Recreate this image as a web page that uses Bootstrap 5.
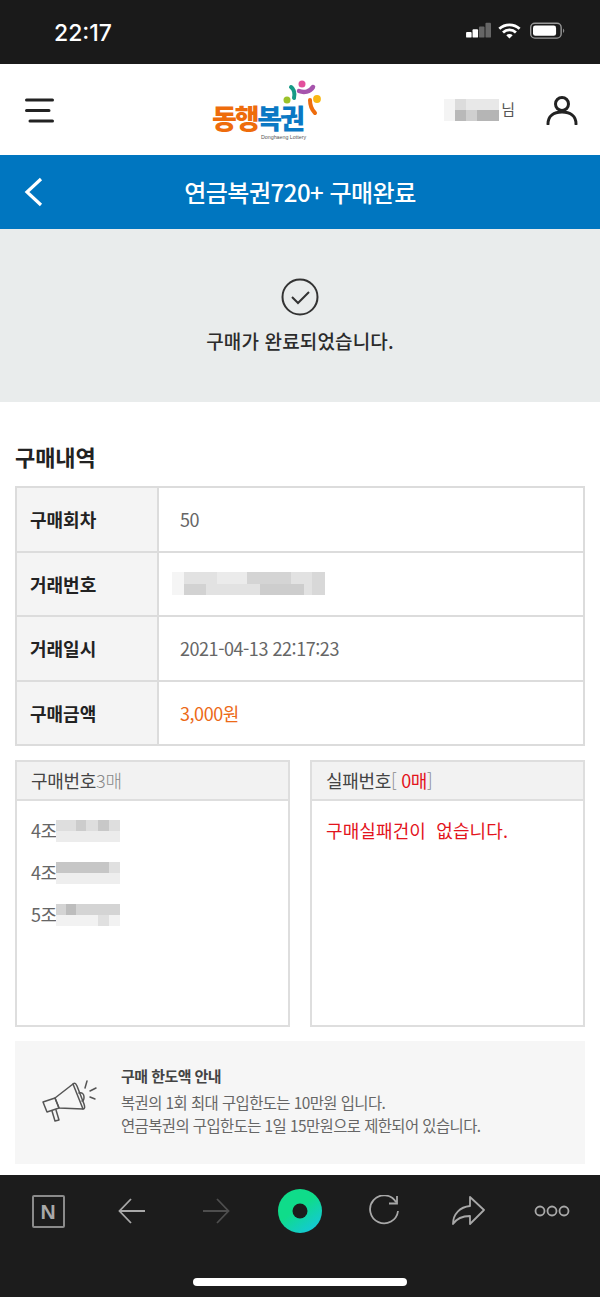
<!DOCTYPE html>
<html lang="ko">
<head>
  <meta charset="UTF-8" />
  <meta name="viewport" content="width=device-width, initial-scale=1" />
  <title>연금복권720+ 구매완료</title>
  <link rel="stylesheet" href="https://cdn.jsdelivr.net/npm/bootstrap@5.3.0/dist/css/bootstrap.min.css" />
  <style>
    body {
      width: 600px;
      height: 1297px;
      overflow: hidden;
      background: #fff;
      font-family: "Noto Sans CJK KR", "Noto Sans", sans-serif;
      letter-spacing: -0.6px;
    }
    /* phone status bar */
    .status-bar { height: 64px; background: #1a1a1a; color: #fff; padding: 0 30px 0 54px; }
    .status-time { font-family: "Inter", sans-serif; font-size: 23px; font-weight: 500; letter-spacing: 0; padding-top: 2px; }
    .status-icons { padding-top: 2px; }
    /* site header */
    .site-head { height: 91px; padding: 0 22px 0 24px; }
    .logo-wrap { position: absolute; left: 212px; top: 14px; width: 112px; height: 66px; }
    .logo-word { position: absolute; left: 0; top: 25px; font-size: 27px; font-weight: 900; letter-spacing: -2.2px; line-height: 30px; white-space: nowrap; }
    .logo-org { color: #ee6c0c; }
    .logo-blue { color: #0a78c4; }
    .logo-sub { position: absolute; left: 49px; top: 55px; font-size: 5.3px; color: #555; letter-spacing: 0; line-height: 8px; font-family: "Liberation Sans", sans-serif; }
    .user-name { font-size: 15px; color: #555; letter-spacing: 0; margin-left: 2px; }
    .user-icon { margin-left: 31px; }
    /* blue title bar */
    .title-bar { height: 74px; background: #0076c0; color: #fff; position: relative; }
    .title-bar h1 { font-size: 24px; font-weight: 500; letter-spacing: -0.5px; margin: 0; }
    .back-btn { position: absolute; left: 24px; top: 22px; line-height: 0; }
    /* done message */
    .done-box { height: 173px; background: #e9ecec; color: #2b2b2b; font-size: 19px; font-weight: 500; padding-top: 49px; letter-spacing: 0.15px; }
    .done-box p { margin: 10px 0 0; line-height: 30px; }
    /* purchase table */
    .section-title { font-size: 22px; font-weight: 700; color: #222; margin: 38px 0 14px 15px; line-height: 32px; letter-spacing: -0.1px; }
    .buy-table { width: 570px; margin: 0 15px 14px; --bs-border-color: #dcdcdc; border-width: 2px; table-layout: fixed; }
    .buy-table > tbody > tr > * { height: 64.5px; border-width: 2px; padding: 0 13px; vertical-align: middle; font-size: 18px; line-height: 26px; }
    .buy-table > tbody > tr > th { width: 142px; background: #f4f4f4; font-weight: 700; color: #222; letter-spacing: 0; }
    .buy-table > tbody > tr > td { padding-left: 21px; color: #666; letter-spacing: -0.45px; }
    .buy-table > tbody > tr > td.price-cell { color: #ec6a18; }
    .mosaic { display: block; }
    .mosaic-wide { margin-left: -8px; }
    /* number panels */
    .panel-row { padding: 0 15px; gap: 20px; }
    .num-card { width: 275px; height: 267px; border: 2px solid #dedede; border-radius: 0; --bs-card-border-radius: 0; --bs-card-inner-border-radius: 0; }
    .num-card .card-header { height: 39px; padding: 0 14px; background: #f2f2f2; border-bottom: 2px solid #dedede; font-size: 18px; line-height: 36px; color: #444; letter-spacing: -0.3px; }
    .num-card .card-body { padding: 14px 14px; font-size: 18px; color: #666; }
    .num-line { height: 31px; line-height: 31px; margin-bottom: 11px; }
    .qty-text { color: #888; font-weight: 300; }
    .red-text { color: #e3141d; font-weight: 400; }
    .fail-line { letter-spacing: 0.1px; }
    /* limit notice */
    .limit-box { height: 123px; margin: 14px 15px 0; background: #f6f6f6; padding: 0 0 4px 27px; color: #666; font-size: 15.4px; line-height: 23px; }
    .limit-box strong { display: block; color: #444; font-size: 15px; font-weight: 700; margin-bottom: 4px; }
    .limit-text { margin-left: 23px; letter-spacing: -0.55px; }
    /* browser toolbar */
    .browser-bar { position: absolute; left: 0; top: 1175px; width: 600px; height: 122px; background: #1c1c1c; }
    .tool-row { height: 72px; padding: 0 6px; }
    .tool-slot { width: 84px; display: flex; justify-content: center; align-items: center; height: 72px; }
    .naver-box { width: 33px; height: 33px; border: 2px solid #8a8a8a; border-radius: 2px; color: #a8a8a8; font-family: "Liberation Sans", sans-serif; font-size: 21px; font-weight: 700; line-height: 29px; text-align: center; letter-spacing: 0; }
    .home-line { width: 214px; height: 8px; margin: 31px auto 0; background: #fff; border-radius: 4px; }
  </style>
</head>
<body>
  <!-- status bar -->
  <div class="status-bar d-flex justify-content-between align-items-center">
    <div class="status-time">22:17</div>
    <svg class="status-icons" width="110" height="26" viewBox="0 0 110 26">
      <rect x="2" y="12" width="6" height="6" rx="1" fill="#fff"/>
      <rect x="9" y="9" width="6" height="9" rx="1" fill="#fff"/>
      <rect x="16" y="6" width="6" height="12" rx="1" fill="#666"/>
      <rect x="23" y="2" width="6" height="16" rx="1" fill="#666"/>
      <path d="M38 8.500a16 16 0 0 1 22 0M42 12.500a10 10 0 0 1 14 0" fill="none" stroke="#fff" stroke-width="3"/>
      <path d="M45.500 15.500a5 5 0 0 1 7 0L49 19z" fill="#fff"/>
      <rect x="72" y="2.500" width="33" height="16" rx="4.500" fill="none" stroke="#999" stroke-width="1.500"/>
      <rect x="74.500" y="5" width="25" height="11" rx="2.500" fill="#fff"/>
      <path d="M107 8v5a3 3 0 0 0 0-5z" fill="#888"/>
    </svg>
  </div>

  <!-- site header -->
  <header class="site-head d-flex justify-content-between align-items-center position-relative">
    <svg width="32" height="28" viewBox="0 0 32 28">
      <path d="M2.500 4H28.500M2.500 14.500H25M6 25H28.500" stroke="#222" stroke-width="3" stroke-linecap="round"/>
    </svg>
    <div class="logo-wrap">
      <svg width="112" height="40" viewBox="0 0 112 40" class="position-absolute top-0 start-0">
        <circle cx="90" cy="6" r="3.500" fill="#e34f9c"/>
        <path d="M79 9c3 2 4 6 3 11" fill="none" stroke="#179a86" stroke-width="4" stroke-linecap="round"/>
        <circle cx="75" cy="22" r="3.500" fill="#9cc22a"/>
        <path d="M87 13c5 2 11 1 14-4" fill="none" stroke="#a654ac" stroke-width="4.500" stroke-linecap="round"/>
        <circle cx="105" cy="21" r="3.900" fill="#f8b712"/>
        <path d="M98 22c0 5 2 10 5 13" fill="none" stroke="#ee6c0c" stroke-width="4" stroke-linecap="round"/>
      </svg>
      <div class="logo-word d-flex"><span class="logo-org">동행</span><span class="logo-blue">복권</span></div>
      <div class="logo-sub">Donghaeng Lottery</div>
    </div>
    <div class="d-flex align-items-center">
      <svg class="mosaic" width="55" height="22" viewBox="0 0 55 22" shape-rendering="crispEdges">
        <rect width="55" height="22" fill="#e8e8e8"/>
        <rect x="0" width="11" height="22" fill="#f4f4f4"/>
        <rect x="11" y="11" width="11" height="11" fill="#b9b9b9"/>
        <rect x="22" y="11" width="11" height="11" fill="#cfcfcf"/>
        <rect x="33" y="11" width="22" height="11" fill="#b5b5b5"/>
        <rect x="11" width="11" height="11" fill="#dcdcdc"/>
      </svg>
      <span class="user-name">님</span>
      <svg class="user-icon" width="32" height="30" viewBox="0 0 32 30">
        <circle cx="16" cy="9" r="6.500" fill="none" stroke="#222" stroke-width="3"/>
        <path d="M2 29c0-8 6-12 14-12s14 4 14 12" fill="none" stroke="#222" stroke-width="3" stroke-linecap="round"/>
      </svg>
    </div>
  </header>

  <!-- title bar -->
  <div class="title-bar d-flex justify-content-center align-items-center">
    <a class="back-btn" href="#">
      <svg width="20" height="30" viewBox="0 0 20 30"><path d="M17 2L3 15l14 13" fill="none" stroke="#fff" stroke-width="3.200"/></svg>
    </a>
    <h1>연금복권720+ 구매완료</h1>
  </div>

  <!-- complete message -->
  <div class="done-box text-center">
    <svg width="38" height="38" viewBox="0 0 38 38" class="d-block mx-auto">
      <circle cx="19" cy="19" r="17.500" fill="none" stroke="#333" stroke-width="2"/>
      <path d="M11 19l6 6 11-11" fill="none" stroke="#333" stroke-width="2"/>
    </svg>
    <p>구매가 완료되었습니다.</p>
  </div>

  <h2 class="section-title">구매내역</h2>
  <table class="table table-bordered buy-table">
    <tbody>
      <tr><th scope="row">구매회차</th><td>50</td></tr>
      <tr>
        <th scope="row">거래번호</th>
        <td>
          <svg class="mosaic mosaic-wide" width="153" height="23" viewBox="0 0 153 23" shape-rendering="crispEdges">
            <rect width="153" height="23" fill="#e2e2e2"/>
            <rect x="0" width="12" height="23" fill="#f5f5f5"/>
            <rect x="12" y="12" width="22" height="11" fill="#d2d2d2"/>
            <rect x="45" width="30" height="12" fill="#ebebeb"/>
            <rect x="75" width="44" height="12" fill="#d4d4d4"/>
            <rect x="88" y="12" width="44" height="11" fill="#cdcdcd"/>
            <rect x="140" width="13" height="23" fill="#d8d8d8"/>
          </svg>
        </td>
      </tr>
      <tr><th scope="row">거래일시</th><td>2021-04-13 22:17:23</td></tr>
      <tr><th scope="row">구매금액</th><td class="price-cell">3,000원</td></tr>
    </tbody>
  </table>

  <!-- purchased / failed numbers -->
  <div class="panel-row d-flex">
    <div class="card num-card">
      <div class="card-header">구매번호<span class="qty-text">3매</span></div>
      <div class="card-body">
        <div class="num-line d-flex align-items-center">4조
          <svg class="mosaic" width="64" height="22" viewBox="0 0 64 22" shape-rendering="crispEdges">
            <rect width="64" height="22" fill="#ececec"/>
            <rect x="0" width="64" height="11" fill="#dedede"/>
            <rect x="20" width="10" height="11" fill="#cccccc"/>
            <rect x="42" width="11" height="11" fill="#c8c8c8"/>
          </svg>
        </div>
        <div class="num-line d-flex align-items-center">4조
          <svg class="mosaic" width="64" height="22" viewBox="0 0 64 22" shape-rendering="crispEdges">
            <rect width="64" height="22" fill="#eeeeee"/>
            <rect x="0" width="53" height="11" fill="#c6c6c6"/>
            <rect x="53" width="11" height="11" fill="#e0e0e0"/>
          </svg>
        </div>
        <div class="num-line d-flex align-items-center">5조
          <svg class="mosaic" width="64" height="22" viewBox="0 0 64 22" shape-rendering="crispEdges">
            <rect width="64" height="22" fill="#f2f2f2"/>
            <rect x="0" width="64" height="11" fill="#d4d4d4"/>
            <rect x="10" width="10" height="11" fill="#bdbdbd"/>
            <rect x="42" y="11" width="11" height="11" fill="#e0e0e0"/>
          </svg>
        </div>
      </div>
    </div>
    <div class="card num-card">
      <div class="card-header">실패번호<span class="qty-text">[ <span class="red-text">0매</span>]</span></div>
      <div class="card-body">
        <div class="num-line red-text fail-line">구매실패건이&nbsp; 없습니다.</div>
      </div>
    </div>
  </div>

  <!-- limit notice -->
  <div class="limit-box d-flex align-items-center">
    <svg width="56" height="42" viewBox="0 0 56 42" class="flex-shrink-0">
      <g fill="none" stroke="#555" stroke-width="1.500" stroke-linejoin="round" stroke-linecap="round">
        <path d="M1 22l12-4 4 10-12 4z"/>
        <path d="M13 18l18-14 10 25-24-1z"/>
        <path d="M31 4c2-2 3 0 4 2l7 18c1 3 1 5-1 5"/>
        <path d="M37 13c3-1 5 1 5 4s-1 4-2 4"/>
        <path d="M10 31l3 10 4-1-3-10"/>
        <path d="M45 1l-2 7M54 8l-6 3M53 19l-5-2"/>
      </g>
    </svg>
    <div class="limit-text">
      <strong>구매 한도액 안내</strong>
      복권의 1회 최대 구입한도는 10만원 입니다.<br />
      연금복권의 구입한도는 1일 15만원으로 제한되어 있습니다.
    </div>
  </div>

  <!-- browser toolbar -->
  <div class="browser-bar">
    <div class="tool-row d-flex">
      <div class="tool-slot">
        <div class="naver-box">N</div>
      </div>
      <div class="tool-slot">
        <svg width="28" height="26" viewBox="0 0 28 26"><path d="M27 13H2M13 1L1.500 13 13 25" fill="none" stroke="#a8a8a8" stroke-width="1.800"/></svg>
      </div>
      <div class="tool-slot">
        <svg width="28" height="26" viewBox="0 0 28 26"><path d="M1 13h25M15 1l11.500 12L15 25" fill="none" stroke="#4e4e4e" stroke-width="1.800"/></svg>
      </div>
      <div class="tool-slot">
        <svg width="44" height="44" viewBox="0 0 44 44">
          <defs><linearGradient id="greenDot" x1="0.200" y1="0.100" x2="0.800" y2="0.950"><stop offset="0.400" stop-color="#0fdc8a"/><stop offset="1" stop-color="#14c8d8"/></linearGradient></defs>
          <circle cx="22" cy="22" r="22" fill="url(#greenDot)"/>
          <circle cx="22" cy="22" r="7.500" fill="#1c1c1c"/>
        </svg>
      </div>
      <div class="tool-slot">
        <svg width="32" height="32" viewBox="0 0 32 32"><path d="M28 7a14 14 0 1 0 2 9M29 1v7.500h-8" fill="none" stroke="#a8a8a8" stroke-width="1.800"/></svg>
      </div>
      <div class="tool-slot">
        <svg width="34" height="30" viewBox="0 0 34 30"><path d="M19 1l14 13-14 14v-8c-7 0-13 2-17 8 0-10 7-17 17-18z" fill="none" stroke="#a8a8a8" stroke-width="1.800" stroke-linejoin="round"/></svg>
      </div>
      <div class="tool-slot">
        <svg width="36" height="12" viewBox="0 0 36 12"><g fill="none" stroke="#a8a8a8" stroke-width="1.800"><circle cx="6" cy="6" r="4.500"/><circle cx="18" cy="6" r="4.500"/><circle cx="30" cy="6" r="4.500"/></g></svg>
      </div>
    </div>
    <div class="home-line"></div>
  </div>

  <script src="https://cdn.jsdelivr.net/npm/bootstrap@5.3.0/dist/js/bootstrap.bundle.min.js"></script>
</body>
</html>
